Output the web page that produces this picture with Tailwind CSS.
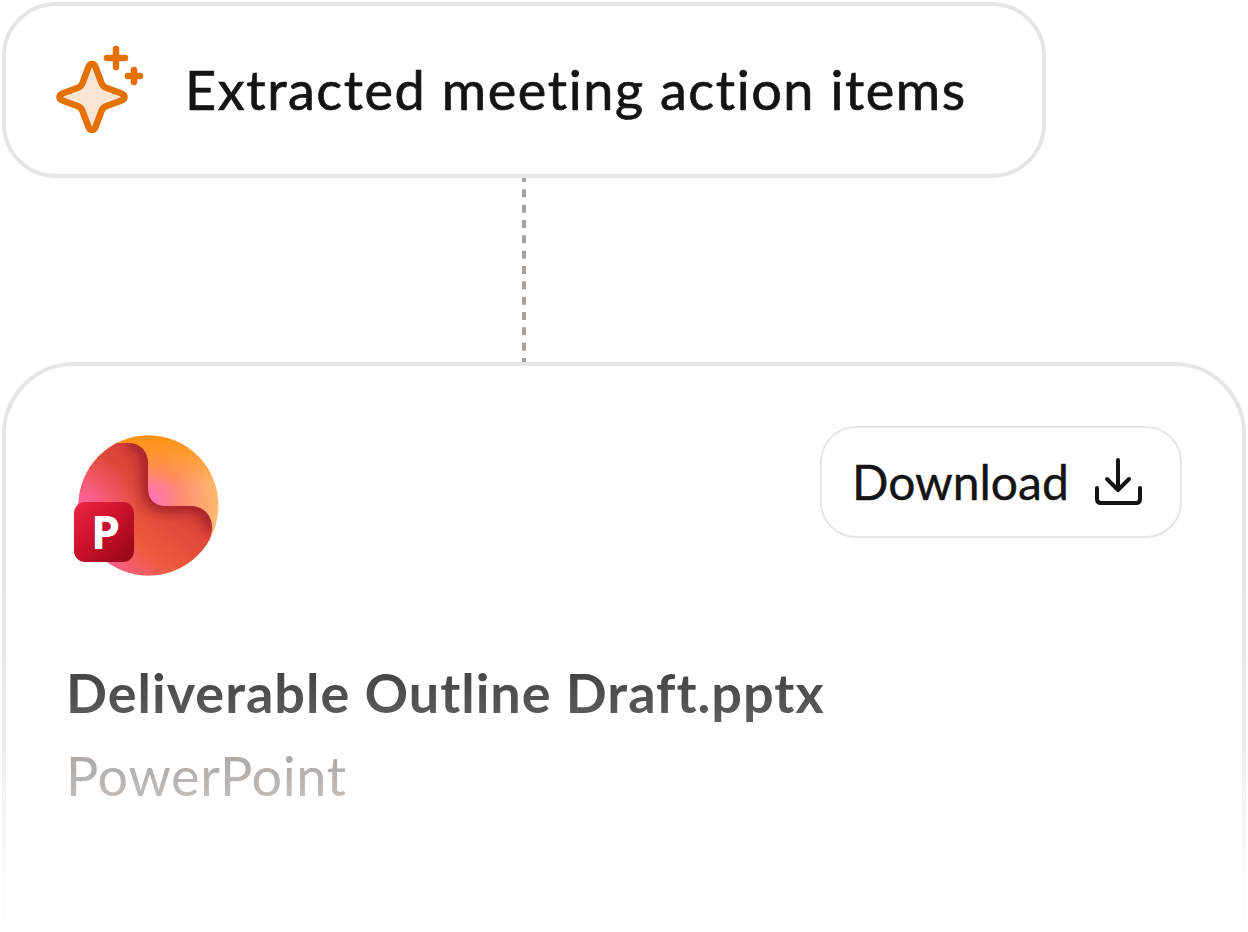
<!DOCTYPE html>
<html lang="en">
<head>
    <meta charset="UTF-8">
    <meta name="viewport" content="width=device-width, initial-scale=1.0">
    <title>Extracted meeting action items</title>
    <script src="https://cdn.jsdelivr.net/npm/@tailwindcss/browser@4"></script>
</head>
<body class="bg-white">
    <div class="relative w-[1248px] h-[932px] overflow-hidden bg-white pt-[2px] pl-[2px] font-['Lato','Noto_Sans',sans-serif]">
        <!-- prompt card -->
        <div class="w-[1044px] h-[176px] rounded-[54px] border-4 border-[#e5e5e3] flex items-center pl-[48px]">
            <svg class="w-[92px] h-[92px] shrink-0" viewBox="54 43 92 92" fill="none" stroke="#e57200" stroke-width="6.5" stroke-linecap="round" stroke-linejoin="round">
                <path fill="#fbe5d3" d="M88.5 66 C90 62 94 62 95.5 66 L101.5 82 Q102.5 85 105.5 86.5 L121.5 92.5 C125.5 94 125.5 98 121.5 99.5 L105.5 105.5 Q102.5 107 101.5 110 L95.5 126 C94 130 90 130 88.5 126 L82.5 110 Q81.5 107 78.5 105.5 L62.5 99.5 C58.5 98 58.5 94 62.5 92.5 L78.5 86.5 Q81.5 85 82.5 82 Z"/>
                <path d="M116 48 V66 M107 57 H125 M134 69 V81 M128 75 H140"/>
            </svg>
            <span class="ml-[39px] text-[54px] leading-none text-[#141414] tracking-[1.57px] [-webkit-text-stroke:0.7px_#141414]">Extracted meeting action items</span>
        </div>

        <!-- connector -->
        <svg class="block ml-[520px] w-1 h-[184px]" viewBox="0 0 4 184">
            <line x1="2" y1="-4" x2="2" y2="188" stroke="#a8a29e" stroke-width="4" stroke-dasharray="8 7.33"/>
        </svg>

        <!-- file card -->
        <div class="w-[1244px] h-[640px] rounded-t-[72px] border-4 border-[#e5e5e3] pt-[60px] px-[60px]">
            <div class="flex items-start justify-between">
                <svg class="w-40 h-40 shrink-0" viewBox="66 426 160 160">
                    <defs>
                        <radialGradient id="base" cx="148" cy="500" r="74" gradientUnits="userSpaceOnUse">
                            <stop offset="0" stop-color="#ff6fc0"/>
                            <stop offset="0.45" stop-color="#ff8a70"/>
                            <stop offset="1" stop-color="#ffc070"/>
                        </radialGradient>
                        <linearGradient id="top" x1="170" y1="436" x2="170" y2="486" gradientUnits="userSpaceOnUse">
                            <stop offset="0" stop-color="#ff9010"/>
                            <stop offset="1" stop-color="#ff9010" stop-opacity="0"/>
                        </linearGradient>
                        <linearGradient id="shape" x1="105" y1="572" x2="170" y2="490" gradientUnits="userSpaceOnUse">
                            <stop offset="0" stop-color="#f8609a"/>
                            <stop offset="0.4" stop-color="#ee5a3c"/>
                            <stop offset="1" stop-color="#d8423a"/>
                        </linearGradient>
                        <radialGradient id="pink" cx="76" cy="512" r="62" gradientUnits="userSpaceOnUse">
                            <stop offset="0" stop-color="#ff62b0"/>
                            <stop offset="1" stop-color="#ff62b0" stop-opacity="0"/>
                        </radialGradient>
                        <linearGradient id="tile" x1="78" y1="504" x2="130" y2="560" gradientUnits="userSpaceOnUse">
                            <stop offset="0" stop-color="#e8243f"/>
                            <stop offset="0.5" stop-color="#c80f2c"/>
                            <stop offset="1" stop-color="#950818"/>
                        </linearGradient>
                        <clipPath id="disc"><circle cx="148.5" cy="505.5" r="70"/></clipPath>
                        <clipPath id="blob-clip"><path d="M70 430 H118 V443 H128 C140 443 148 451 148 463 V488 C148 499 154 506 165 506 H190 C204 506 213 516 212 530 L200 590 H70 Z"/></clipPath>
                        <filter id="soft" x="-30%" y="-30%" width="160%" height="160%"><feGaussianBlur stdDeviation="6"/></filter>
                    </defs>
                    <g clip-path="url(#disc)">
                        <rect x="70" y="430" width="160" height="150" fill="url(#base)"/>
                        <rect x="70" y="430" width="160" height="150" fill="url(#top)"/>
                        <g clip-path="url(#blob-clip)">
                            <rect x="70" y="430" width="160" height="160" fill="url(#shape)"/>
                            <rect x="70" y="430" width="160" height="160" fill="url(#pink)"/>
                            <path fill="none" stroke="#a01c28" stroke-width="12" filter="url(#soft)" d="M128 443 C140 443 148 451 148 463 V488 C148 499 154 506 165 506 H190 C204 506 213 516 212 530"/>
                        </g>
                    </g>
                    <rect x="74" y="502" width="60" height="60" rx="11" fill="url(#tile)"/>
                    <text x="91" y="549" font-family="Noto Sans" font-weight="700" font-size="47" fill="#fff">P</text>
                </svg>
                <div class="w-[362px] h-[112px] rounded-[36px] border-2 border-[#e5e5e3] flex items-center justify-between pl-[30px] pr-[36px]">
                    <span class="text-[48px] leading-none text-[#141414] [-webkit-text-stroke:0.4px_#141414]">Download</span>
                    <svg class="w-[52px] h-[52px] shrink-0" viewBox="1092 456 52 52" fill="none" stroke="#141414" stroke-width="4" stroke-linecap="round" stroke-linejoin="round">
                        <path d="M1118 460 V490 M1107 479 L1118 490 L1129 479 M1097 488 V499 Q1097 503 1101 503 H1136 Q1140 503 1140 499 V488"/>
                    </svg>
                </div>
            </div>
            <h2 class="mt-[75px] text-[54px] leading-[64px] font-bold text-[#141414] tracking-[1px]">Deliverable Outline Draft.pptx</h2>
            <p class="mt-[19px] text-[54px] leading-[64px] text-[#78716c] tracking-[0.6px]">PowerPoint</p>
        </div>

        <!-- bottom fade -->
        <div class="absolute left-0 right-0 top-[580px] h-[352px] bg-gradient-to-b from-white/0 via-white/40 via-[51%] to-white to-[98%] pointer-events-none"></div>
    </div>
</body>
</html>
